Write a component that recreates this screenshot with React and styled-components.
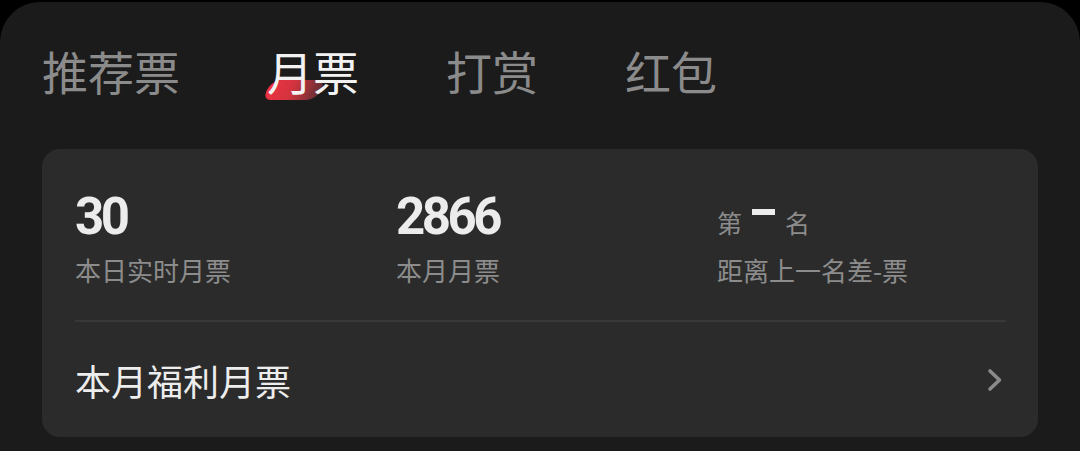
import React from 'react';
import styled, { createGlobalStyle } from 'styled-components';

const GlobalStyle = createGlobalStyle`
  html, body {
    margin: 0;
    padding: 0;
    background: #000;
  }
  body {
    font-family: "Noto Sans CJK SC", "Noto Sans", sans-serif;
  }
`;

const Sheet = styled.div`
  margin-top: 2px;
  height: 449px;
  background: #1b1b1b;
  border-radius: 40px 40px 0 0;
  padding: 45px 42px 0 42px;
  box-sizing: border-box;
`;

const Tabs = styled.div`
  display: flex;
  gap: 87px;
  margin-bottom: 56px;
`;

const Tab = styled.div`
  position: relative;
  isolation: isolate;
  font-size: 46px;
  line-height: 46px;
  color: ${p => (p.$active ? '#f2f2f2' : '#8b8b8b')};

  &::before {
    content: '';
    display: ${p => (p.$active ? 'block' : 'none')};
    position: absolute;
    left: 0px;
    top: 33px;
    width: 54px;
    height: 20px;
    border-radius: 10px 8px 10px 8px;
    transform: skewX(-24deg);
    background: linear-gradient(90deg, #ec3242 0%, #d4333f 45%, rgba(150, 62, 66, 0.6) 100%);
    z-index: -1;
  }
`;

const Card = styled.div`
  background: #2b2b2b;
  border-radius: 18px;
  height: 288px;
  padding: 0 32px 0 33px;
  box-sizing: border-box;
  display: flex;
  flex-direction: column;
`;

const Stats = styled.div`
  display: grid;
  grid-template-columns: 321px 321px 1fr;
  padding-top: 42px;
  padding-bottom: 37px;
  border-bottom: 2px solid #383838;
`;

const Stat = styled.div`
  display: flex;
  flex-direction: column;
  gap: 14px;
`;

const Number = styled.div`
  font-family: Roboto, "Liberation Sans", sans-serif;
  font-weight: 700;
  font-size: 51px;
  line-height: 52px;
  letter-spacing: -3.5px;
  color: #ececec;
`;

const Label = styled.div`
  font-size: 26px;
  line-height: 26px;
  color: #8c8c8c;
`;

const Rank = styled.div`
  height: 52px;
  display: flex;
  align-items: flex-end;
  gap: 10px;
  font-size: 25px;
  line-height: 25px;
  color: #8c8c8c;
  padding-bottom: 8px;
  box-sizing: border-box;
`;

const RankDash = styled.span`
  display: block;
  width: 23px;
  height: 6px;
  background: #ececec;
  align-self: flex-start;
  margin-top: 18px;
`;

const Row = styled.div`
  flex: 1;
  display: flex;
  align-items: center;
  justify-content: space-between;
  font-size: 36px;
  color: #ededed;
  padding-right: 3px;
`;

const Chevron = () => (
  <svg width="16" height="24" viewBox="0 0 16 24" fill="none">
    <path d="M3 3 L12.5 12 L3 21" stroke="#8a8a8a" strokeWidth="3.6" strokeLinecap="round" strokeLinejoin="round" />
  </svg>
);

export default function App() {
  const tabs = ['推荐票', '月票', '打赏', '红包'];
  return (
    <>
      <GlobalStyle />
      <Sheet>
        <Tabs>
          {tabs.map(t => (
            <Tab key={t} $active={t === '月票'}>{t}</Tab>
          ))}
        </Tabs>
        <Card>
          <Stats>
            <Stat>
              <Number>30</Number>
              <Label>本日实时月票</Label>
            </Stat>
            <Stat>
              <Number>2866</Number>
              <Label>本月月票</Label>
            </Stat>
            <Stat>
              <Rank>
                <span>第</span>
                <RankDash aria-label="-" />
                <span>名</span>
              </Rank>
              <Label>距离上一名差-票</Label>
            </Stat>
          </Stats>
          <Row>
            <span>本月福利月票</span>
            <Chevron />
          </Row>
        </Card>
      </Sheet>
    </>
  );
}
